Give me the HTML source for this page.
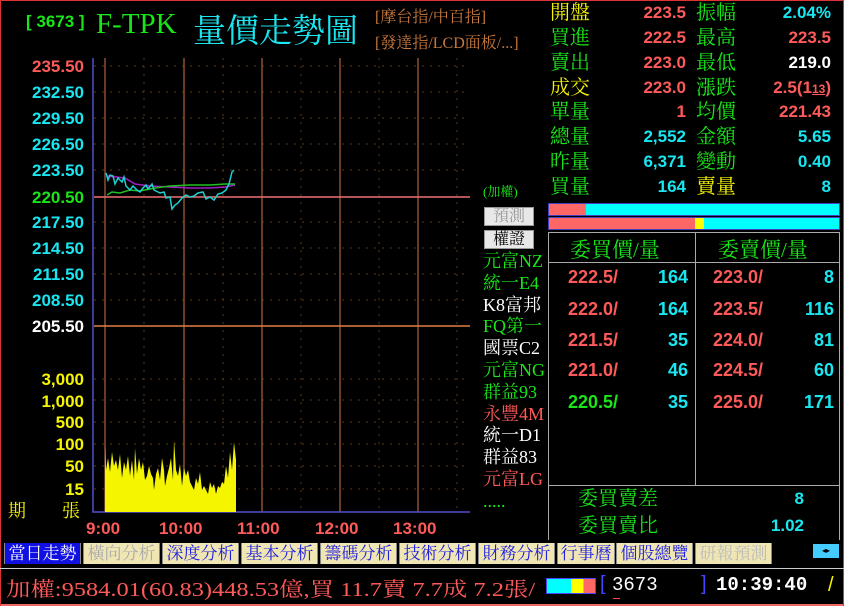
<!DOCTYPE html>
<html><head><meta charset="utf-8"><style>
*{margin:0;padding:0;box-sizing:border-box}
body{width:844px;height:606px;background:#000;overflow:hidden;position:relative;font-family:"Liberation Sans","Noto Sans CJK TC",sans-serif}
.a{position:absolute;white-space:nowrap}
.s{font-family:"Liberation Serif","Noto Serif CJK SC",serif}
.lb{font-size:20px;line-height:22px;font-family:"Liberation Serif","Noto Serif CJK SC",serif}
.v{font-size:17px;font-weight:bold;line-height:22px;text-align:right}
.ob{font-size:18px}
.g{color:#19e619}.y{color:#f5f500}.r{color:#ff5a5a}.c{color:#19e6f0}.w{color:#fff}
.tab{position:absolute;top:543px;width:77px;height:21px;background:#efe6b4;color:#2020e0;font-size:17px;line-height:21px;text-align:center;font-family:"Liberation Serif","Noto Serif CJK SC",serif;border-right:1px solid #888;border-left:1px solid #888}
</style></head><body>
<div class="a" style="left:0;top:0;width:844px;height:1px;background:#d33"></div>
<div class="a" style="left:0;top:604px;width:844px;height:2px;background:#e66"></div>
<div class="a" style="left:0;top:0;width:1px;height:606px;background:#d33"></div>
<div class="a" style="left:843px;top:0;width:1px;height:606px;background:#d33"></div>

<div class="a g" style="left:26px;top:12px;font-size:17px;font-weight:bold">[ 3673 ]</div>
<div class="a g s" style="left:96px;top:8px;font-size:29px">F-TPK</div>
<div class="a c s" style="left:193px;top:5px;font-size:33px">量價走勢圖</div>
<div class="a s" style="left:375px;top:4px;font-size:16px;color:#c8783c">[摩台指/中百指]</div>
<div class="a s" style="left:375px;top:30px;font-size:16px;color:#c8783c">[發達指/LCD面板/...]</div>

<svg class="a" style="left:0;top:0" width="548" height="540">
<g font-family="Liberation Sans" font-size="17" font-weight="bold">
<text x="84" y="72" fill="#ff5a5a" text-anchor="end">235.50</text>
<text x="84" y="98" fill="#19e6f0" text-anchor="end">232.50</text>
<text x="84" y="124" fill="#19e6f0" text-anchor="end">229.50</text>
<text x="84" y="150" fill="#19e6f0" text-anchor="end">226.50</text>
<text x="84" y="176" fill="#19e6f0" text-anchor="end">223.50</text>
<text x="84" y="203" fill="#19e619" text-anchor="end">220.50</text>
<text x="84" y="228" fill="#19e6f0" text-anchor="end">217.50</text>
<text x="84" y="254" fill="#19e6f0" text-anchor="end">214.50</text>
<text x="84" y="280" fill="#19e6f0" text-anchor="end">211.50</text>
<text x="84" y="306" fill="#19e6f0" text-anchor="end">208.50</text>
<text x="84" y="332" fill="#fff" text-anchor="end">205.50</text>
<text x="84" y="385" fill="#f5f500" text-anchor="end">3,000</text>
<text x="84" y="407" fill="#f5f500" text-anchor="end">1,000</text>
<text x="84" y="428" fill="#f5f500" text-anchor="end">500</text>
<text x="84" y="450" fill="#f5f500" text-anchor="end">100</text>
<text x="84" y="472" fill="#f5f500" text-anchor="end">50</text>
<text x="84" y="495" fill="#f5f500" text-anchor="end">15</text>
<text x="86" y="534" fill="#ff5a5a">9:00</text>
<text x="159" y="534" fill="#ff5a5a">10:00</text>
<text x="237" y="534" fill="#ff5a5a">11:00</text>
<text x="315" y="534" fill="#ff5a5a">12:00</text>
<text x="393" y="534" fill="#ff5a5a">13:00</text>
</g>
<text x="8" y="517" fill="#f5f500" font-size="18" font-family="Noto Serif CJK SC">期</text>
<text x="62" y="517" fill="#f5f500" font-size="18" font-family="Noto Serif CJK SC">張</text>
<g stroke="#5a3a1a" stroke-dasharray="2,6">
<path d="M144 58V512M223 58V512M301 58V512M379 58V512M457 58V512"/>
<path d="M94 66H470M94 92H470M94 118H470M94 144H470M94 170H470M94 222H470M94 248H470M94 274H470M94 300H470M94 379H470M94 400H470M94 422H470M94 444H470M94 466H470M94 489H470"/>
</g>
<g stroke="#8a5030" stroke-width="1.5"><path d="M105 58V512M184 58V512M262 58V512M340 58V512M418 58V512"/></g>
<path d="M94 197H470" stroke="#f07070" stroke-width="1.5"/>
<path d="M94 326H470" stroke="#e08040" stroke-width="1.5"/>
<path d="M93 58V512H470" stroke="#5050d0" fill="none" stroke-width="1.5"/>
<polyline fill="none" stroke="#a020c0" stroke-width="1.5" points="107,176 125,178 135,184 150,186 170,187 190,188 210,188 225,187 235,185"/>
<polyline fill="none" stroke="#20c020" stroke-width="1.5" points="107,195 112,192 120,193 130,190 140,191 155,188 170,186 190,185 210,185 225,184 235,184"/>
<polyline fill="none" stroke="#20d0d0" stroke-width="1.5" points="106,173 108,180 110,175 113,176 115,184 118,178 122,182 124,177 126,186 130,190 133,186 137,190 140,192 143,188 146,185 148,189 152,184 154,190 160,193 164,192 166,198 170,197 172,209 175,205 178,203 182,198 186,195 190,197 194,196 198,193 203,192 206,199 210,197 214,200 218,194 222,193 226,190 229,184 232,172 234,170"/>
<path fill="#f5f500" d="M105 512V444L106 470L108 458L110 472L112 452L114 466L116 460L118 470L120 454L122 478L124 462L126 470L128 456L130 476L132 460L134 480L135 448L137 474L139 458L141 470L143 462L145 480L147 476L149 466L151 474L153 478L154 490L156 474L158 468L160 480L162 458L164 470L165 486L167 476L169 468L171 458L173 480L174 440L176 470L178 476L180 464L182 486L184 468L186 476L188 470L190 482L192 486L194 490L196 478L198 484L200 472L202 490L204 486L206 490L208 494L210 482L212 488L214 484L216 494L218 486L220 488L222 482L224 484L226 466L228 478L230 452L232 470L234 442L236 460V512Z"/>
</svg>

<div class="a lb y" style="left:550px;top:2px">開盤</div>
<div class="a lb g" style="left:550px;top:27px">買進</div>
<div class="a lb g" style="left:550px;top:52px">賣出</div>
<div class="a lb y" style="left:550px;top:77px">成交</div>
<div class="a lb g" style="left:550px;top:101px">單量</div>
<div class="a lb g" style="left:550px;top:126px">總量</div>
<div class="a lb g" style="left:550px;top:151px">昨量</div>
<div class="a lb g" style="left:550px;top:176px">買量</div>
<div class="a lb g" style="left:696px;top:2px">振幅</div>
<div class="a lb g" style="left:696px;top:27px">最高</div>
<div class="a lb g" style="left:696px;top:52px">最低</div>
<div class="a lb g" style="left:696px;top:77px">漲跌</div>
<div class="a lb g" style="left:696px;top:101px">均價</div>
<div class="a lb g" style="left:696px;top:126px">金額</div>
<div class="a lb g" style="left:696px;top:151px">變動</div>
<div class="a lb y" style="left:696px;top:176px">賣量</div>
<div class="a v r" style="right:158px;top:2px">223.5</div>
<div class="a v r" style="right:158px;top:27px">222.5</div>
<div class="a v r" style="right:158px;top:52px">223.0</div>
<div class="a v r" style="right:158px;top:77px">223.0</div>
<div class="a v r" style="right:158px;top:101px">1</div>
<div class="a v c" style="right:158px;top:126px">2,552</div>
<div class="a v c" style="right:158px;top:151px">6,371</div>
<div class="a v c" style="right:158px;top:176px">164</div>
<div class="a v c" style="right:13px;top:2px">2.04%</div>
<div class="a v r" style="right:13px;top:27px">223.5</div>
<div class="a v w" style="right:13px;top:52px">219.0</div>
<div class="a v r" style="right:13px;top:77px">2.5(1<u style="font-size:12px">13</u>)</div>
<div class="a v r" style="right:13px;top:101px">221.43</div>
<div class="a v c" style="right:13px;top:126px">5.65</div>
<div class="a v c" style="right:13px;top:151px">0.40</div>
<div class="a v c" style="right:13px;top:176px">8</div>

<div class="a g s" style="left:483px;top:181px;font-size:13px">(加權)</div>
<div class="a s" style="left:484px;top:207px;width:50px;height:19px;background:#e8e8e8;border:1px solid #999;color:#999;font-size:16px;text-align:center;line-height:17px">預測</div>
<div class="a s" style="left:484px;top:230px;width:50px;height:19px;background:#e8e8e8;border:1px solid #999;color:#000;font-size:16px;text-align:center;line-height:17px">權證</div>

<div class="a" style="left:548px;top:203px;width:292px;height:13px;background:#0ff;border:1px solid #4040c0"><div style="width:37px;height:11px;background:#f66"></div></div>
<div class="a" style="left:548px;top:217px;width:292px;height:13px;background:#0ff;border:1px solid #4040c0"><div style="width:146px;height:11px;background:#f66;float:left"></div><div style="width:9px;height:11px;background:#ff0;float:left"></div></div>

<div class="a s" style="left:483px;top:251px;font-size:18px;line-height:21.8px">
<div class="g">元富NZ</div><div class="g">統一E4</div><div class="w">K8富邦</div><div class="g">FQ第一</div><div class="w">國票C2</div><div class="g">元富NG</div><div class="g">群益93</div><div class="r">永豐4M</div><div class="w">統一D1</div><div class="w">群益83</div><div class="r">元富LG</div><div class="g">.....</div></div>

<div class="a" style="left:548px;top:232px;width:292px;height:308px;border:1px solid #aaa;border-bottom:none"></div>
<div class="a" style="left:548px;top:262px;width:292px;height:1px;background:#aaa"></div>
<div class="a" style="left:695px;top:232px;width:1px;height:253px;background:#aaa"></div>
<div class="a" style="left:548px;top:485px;width:292px;height:1px;background:#aaa"></div>
<div class="a g s" style="left:570px;top:234px;font-size:21px">委買價/量</div>
<div class="a g s" style="left:718px;top:234px;font-size:21px">委賣價/量</div>
<div class="a v ob r" style="left:568px;top:266px;text-align:left">222.5/</div><div class="a v ob c" style="right:156px;top:266px">164</div>
<div class="a v ob r" style="left:568px;top:298px;text-align:left">222.0/</div><div class="a v ob c" style="right:156px;top:298px">164</div>
<div class="a v ob r" style="left:568px;top:329px;text-align:left">221.5/</div><div class="a v ob c" style="right:156px;top:329px">35</div>
<div class="a v ob r" style="left:568px;top:359px;text-align:left">221.0/</div><div class="a v ob c" style="right:156px;top:359px">46</div>
<div class="a v ob g" style="left:568px;top:391px;text-align:left">220.5/</div><div class="a v ob c" style="right:156px;top:391px">35</div>
<div class="a v ob r" style="left:713px;top:266px;text-align:left">223.0/</div><div class="a v ob c" style="right:10px;top:266px">8</div>
<div class="a v ob r" style="left:713px;top:298px;text-align:left">223.5/</div><div class="a v ob c" style="right:10px;top:298px">116</div>
<div class="a v ob r" style="left:713px;top:329px;text-align:left">224.0/</div><div class="a v ob c" style="right:10px;top:329px">81</div>
<div class="a v ob r" style="left:713px;top:359px;text-align:left">224.5/</div><div class="a v ob c" style="right:10px;top:359px">60</div>
<div class="a v ob r" style="left:713px;top:391px;text-align:left">225.0/</div><div class="a v ob c" style="right:10px;top:391px">171</div>
<div class="a lb g" style="left:578px;top:488px">委買賣差</div>
<div class="a lb g" style="left:578px;top:515px">委買賣比</div>
<div class="a v c" style="right:40px;top:488px">8</div>
<div class="a v c" style="right:40px;top:515px">1.02</div>

<div class="tab" style="left:4px;background:#1010e0;color:#fff">當日走勢</div>
<div class="tab" style="left:83px;color:#aaa">橫向分析</div>
<div class="tab" style="left:162px">深度分析</div>
<div class="tab" style="left:241px">基本分析</div>
<div class="tab" style="left:320px">籌碼分析</div>
<div class="tab" style="left:399px">技術分析</div>
<div class="tab" style="left:478px">財務分析</div>
<div class="tab" style="left:557px;width:58px">行事曆</div>
<div class="tab" style="left:616px">個股總覽</div>
<div class="tab" style="left:695px;color:#bbb">研報預測</div>
<div class="a" style="left:813px;top:544px;width:26px;height:14px;background:#4cf;font-size:8px;text-align:center;line-height:14px">◂▸</div>

<div class="a" style="left:0;top:568px;width:844px;height:1px;background:#ccc"></div>
<div class="a s r" style="left:6px;top:573px;font-size:20px;transform:scaleX(1.22);transform-origin:left">加權:9584.01(60.83)448.53億,買 11.7賣 7.7成 7.2張/</div>
<div class="a" style="left:546px;top:578px;width:50px;height:16px;border:1px solid #44f;background:linear-gradient(90deg,#0ff 0 50%,#ff0 50% 76%,#f66 76%)"></div>
<div class="a" style="left:600px;top:573px;font-size:20px;color:#44f">[</div>
<div class="a w" style="left:612px;top:574px;font-size:19px;font-family:'Liberation Mono',monospace">3673</div>
<div class="a" style="left:613px;top:598px;width:7px;height:1px;background:#f44"></div>
<div class="a" style="left:701px;top:573px;font-size:20px;color:#44f">]</div>
<div class="a w" style="left:716px;top:574px;font-size:19px;font-family:'Liberation Mono',monospace;font-weight:bold">10:39:40</div>
<div class="a y" style="left:828px;top:574px;font-size:20px">/</div>
</body></html>
